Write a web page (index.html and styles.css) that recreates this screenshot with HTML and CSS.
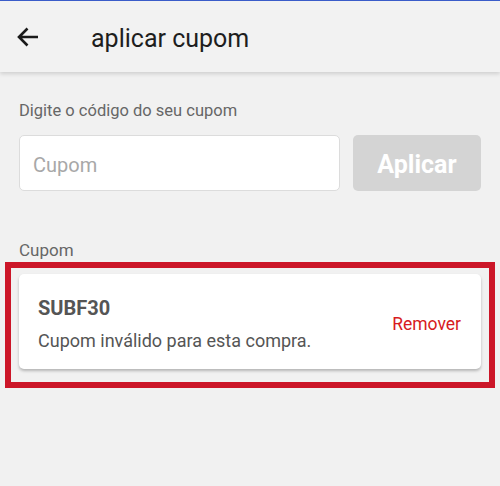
FILE: index.html
```html
<!DOCTYPE html>
<html lang="pt">
  <head>
    <meta charset="UTF-8" />
    <meta name="viewport" content="width=device-width, initial-scale=1.0" />
    <title>aplicar cupom</title>
    <link rel="stylesheet" href="styles.css">
  </head>
  <body>
    <header class="topbar">
      <button class="back" aria-label="Voltar">
        <svg width="24" height="22" viewBox="0 0 24 22">
          <path d="M22 11H4M11.5 2.5L3 11l8.5 8.5" fill="none" stroke="#1a1a1a" stroke-width="2.6" />
        </svg>
      </button>
      <h1>aplicar cupom</h1>
    </header>

    <main class="content">
      <label class="field-label" for="coupon">Digite o código do seu cupom</label>
      <div class="coupon-row">
        <input id="coupon" class="coupon-input" type="text" placeholder="Cupom" />
        <button class="apply-btn" disabled>Aplicar</button>
      </div>

      <div class="section-label">Cupom</div>
      <div class="highlight">
        <div class="coupon-card">
          <div class="coupon-info">
            <div class="coupon-code">SUBF30</div>
            <div class="coupon-msg">Cupom inválido para esta compra.</div>
          </div>
          <a class="remove" href="#">Remover</a>
        </div>
      </div>
    </main>
  </body>
</html>
```

FILE: styles.css
```css
body {
  margin: 0;
  background-color: #f1f1f1;
  font-family: Roboto, "Liberation Sans", Arial, sans-serif;
  color: #222;
}

.topbar {
  height: 71px;
  border-top: 1px solid #3a5cc9;
  background: #f2f2f2;
  display: flex;
  align-items: center;
  box-shadow: 0 2px 4px rgba(0, 0, 0, 0.14);
}

.back {
  background: none;
  border: none;
  padding: 0;
  margin-left: 16px;
  width: 24px;
  height: 22px;
  display: flex;
}

.topbar h1 {
  margin: 3px 0 0 51px;
  font-size: 25px;
  font-weight: 400;
  color: #1e1e1e;
}

.content {
  padding: 29px 19px 0;
}

.field-label {
  display: block;
  font-size: 16.5px;
  color: #666;
}

.coupon-row {
  display: flex;
  gap: 13px;
  margin-top: 15px;
}

.coupon-input {
  flex: 1;
  height: 56px;
  box-sizing: border-box;
  border: 1px solid #dcdcdc;
  border-radius: 5px;
  background: #fff;
  padding: 3px 13px 0;
  font-family: inherit;
  font-size: 20px;
  color: #333;
  outline: none;
}

.coupon-input::placeholder {
  color: #a8a8a8;
}

.apply-btn {
  width: 128px;
  height: 56px;
  border: none;
  border-radius: 5px;
  background: #d4d4d4;
  color: #fff;
  padding-top: 3px;
  font-family: inherit;
  font-size: 25px;
  font-weight: 700;
}

.section-label {
  margin-top: 49px;
  font-size: 17px;
  color: #666;
}

.highlight {
  margin: 2px -14px 0;
  border: 6px solid #cc1628;
  padding: 6px 8px 13px;
}

.coupon-card {
  height: 95px;
  box-sizing: border-box;
  background: #fff;
  border-radius: 5px;
  box-shadow: 0 2px 3px rgba(0, 0, 0, 0.25);
  padding: 4px 20px 0 19px;
  display: flex;
  align-items: center;
  justify-content: space-between;
}

.coupon-code {
  font-size: 20px;
  font-weight: 700;
  color: #555;
}

.coupon-msg {
  margin-top: 10px;
  font-size: 18px;
  color: #555;
}

.remove {
  font-size: 17.5px;
  color: #d71a21;
  text-decoration: none;
}
```
